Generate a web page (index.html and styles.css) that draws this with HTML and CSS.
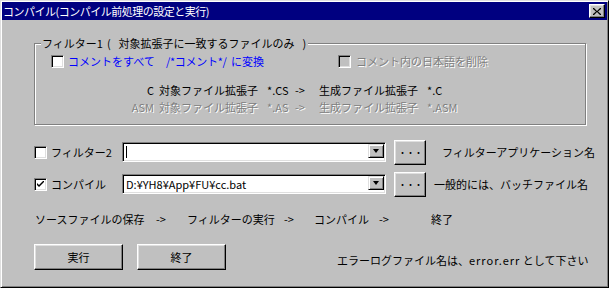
FILE: index.html
```html
<!DOCTYPE html>
<html>
<head>
	<title>コンパイル</title>
	<meta http-equiv="content-type" content="text/html; charset=UTF-8">
	<link rel="stylesheet" href="styles.css">
</head>
<body>
	<div id="window">
		<div id="titlebar">
			<span class="title">コンパイル(コンパイル前処理の設定と実行)</span>
			<span class="close">
				<svg width="8" height="7" viewBox="0 0 8 7">
					<path d="M0 0 L1 0 L4 3 L7 0 L8 0 L8 1 L5 3.5 L8 6 L8 7 L7 7 L4 4 L1 7 L0 7 L0 6 L3 3.5 L0 1 Z" fill="#000"/>
				</svg>
			</span>
		</div>

		<div id="content">
			<div class="group">
				<span class="group-label">フィルター1<span class="gap4">(</span><span class="gap8">対象拡張子に一致するファイルのみ</span><span class="gap8">)</span></span>
				<div class="opt-row">
					<div class="opt-main">
						<span class="check"></span>
						<span class="blue w98">コメントをすべて</span>
						<span class="blue w65">/*コメント*/</span>
						<span class="blue">に変換</span>
					</div>
					<span class="check disabled"></span>
					<span class="dim opt-text">コメント内の日本語を削除</span>
				</div>
				<div class="ext">
					<span class="ext-key">C</span>
					<span>対象ファイル拡張子</span>
					<span>*.CS</span>
					<span>-&gt;</span>
					<span>生成ファイル拡張子</span>
					<span>*.C</span>

					<span class="ext-key dim">ASM</span>
					<span class="dim">対象ファイル拡張子</span>
					<span class="dim">*.AS</span>
					<span class="dim">-&gt;</span>
					<span class="dim">生成ファイル拡張子</span>
					<span class="dim">*.ASM</span>
				</div>
			</div>

			<div class="tool-row first">
				<div class="check-cell">
					<span class="check"></span>
					<span>フィルター2</span>
				</div>
				<div class="combo">
					<span class="combo-text"><span class="caret"></span></span>
					<span class="combo-arrow"><span class="tri"></span></span>
				</div>
				<span class="btn dots">・・・</span>
				<span class="hint wide">フィルターアプリケーション名</span>
			</div>
			<div class="tool-row">
				<div class="check-cell">
					<span class="check checked">
						<svg width="7" height="7" viewBox="0 0 7 7">
							<path d="M0 2 L0 4 L2 6 L7 1 L7 -1 L2 4 Z" fill="#000"/>
						</svg>
					</span>
					<span>コンパイル</span>
				</div>
				<div class="combo">
					<span class="combo-text">D:¥YH8¥App¥FU¥cc.bat</span>
					<span class="combo-arrow"><span class="tri"></span></span>
				</div>
				<span class="btn dots">・・・</span>
				<span class="hint">一般的には、バッチファイル名</span>
			</div>

			<div class="flow">
				<span>ソースファイルの保存</span>
				<span>-&gt;</span>
				<span>フィルターの実行</span>
				<span>-&gt;</span>
				<span>コンパイル</span>
				<span>-&gt;</span>
				<span>終了</span>
			</div>

			<div class="actions">
				<span class="btn action">実行</span>
				<span class="btn action">終了</span>
				<span class="note">エラーログファイル名は、<span class="mono">error.err</span>&nbsp;として下さい</span>
			</div>
		</div>
	</div>
</body>
</html>
```

FILE: styles.css
```css
*{
	box-sizing: border-box;
}

body{
	margin: 0;
	background: #c0c0c0;
	font-family: "Noto Sans CJK JP", "Liberation Sans", sans-serif;
	font-size: 11px;
	line-height: 17px;
	color: #000;
}

#window{
	width: 609px;
	height: 288px;
	padding: 1px;
	border: 1px solid;
	border-color: #dfdfdf #000 #000 #dfdfdf;
	box-shadow: inset 1px 1px 0 #fff, inset -1px -1px 0 #808080;
	background: #c0c0c0;
}

#titlebar{
	height: 18px;
	background: #000080;
	display: flex;
	align-items: center;
	justify-content: space-between;
	padding-left: 1px;
}

#titlebar .title{
	color: #fff;
	letter-spacing: -0.5px;
}

#titlebar .close{
	width: 16px;
	height: 14px;
	margin-right: 2px;
	background: #c0c0c0;
	border: 1px solid;
	border-color: #fff #000 #000 #fff;
	box-shadow: inset -1px -1px 0 #808080, inset 1px 1px 0 #dfdfdf;
	display: flex;
	align-items: center;
	justify-content: center;
}

#content{
	padding: 23px 0 0 32px;
}

.group{
	position: relative;
	width: 552px;
	height: 82px;
	border: 1px solid #808080;
	box-shadow: inset 1px 1px 0 #fff, 1px 1px 0 #fff;
	padding: 11px 0 0 16px;
}

.group-label{
	position: absolute;
	top: -9px;
	left: 6px;
	padding: 0 2px 0 1px;
	background: #c0c0c0;
}

.gap4{
	margin-left: 4px;
}

.gap8{
	margin-left: 8px;
}

.opt-row{
	display: flex;
	align-items: center;
	height: 13px;
}

.opt-main{
	display: flex;
	align-items: center;
	width: 287px;
}

.opt-main .check{
	margin-right: 4px;
}

.opt-text{
	margin-left: 5px;
}

.blue{
	color: #0000ff;
	flex: none;
}

.w98{
	width: 98px;
}

.w65{
	width: 65px;
	letter-spacing: -0.3px;
}

.dim{
	color: #808080;
	text-shadow: 1px 1px 0 #fff;
}

.check{
	width: 13px;
	height: 13px;
	flex: none;
	background: #fff;
	border: 1px solid;
	border-color: #808080 #fff #fff #808080;
	box-shadow: inset 1px 1px 0 #000, inset -1px -1px 0 #dfdfdf;
	display: flex;
	align-items: center;
	justify-content: center;
}

.check.disabled{
	background: #c0c0c0;
}

.ext{
	display: grid;
	grid-template-columns: 40px 108px 28px 24px 108px auto;
	margin: 14px 0 0 68px;
}

.ext-key{
	text-align: right;
	padding-right: 5px;
}

.tool-row{
	display: flex;
	align-items: center;
	height: 26px;
	margin-top: 6px;
}

.tool-row.first{
	margin-top: 14px;
}

.check-cell{
	width: 88px;
	display: flex;
	align-items: center;
	gap: 4px;
}

.combo{
	width: 264px;
	height: 20px;
	margin-right: 8px;
	display: flex;
	padding: 2px;
	background: #fff;
	border: 1px solid;
	border-color: #808080 #fff #fff #808080;
	box-shadow: inset 1px 1px 0 #000, inset -1px -1px 0 #dfdfdf;
}

.combo-text{
	flex: 1;
	display: flex;
	align-items: center;
	padding-left: 1px;
	line-height: 14px;
}

.caret{
	width: 1px;
	height: 12px;
	background: #000;
}

.combo-arrow{
	width: 16px;
	height: 14px;
	margin: -1px -1px 0 0;
	background: #c0c0c0;
	border: 1px solid;
	border-color: #dfdfdf #000 #000 #dfdfdf;
	box-shadow: inset 1px 1px 0 #fff, inset -1px -1px 0 #808080;
	display: flex;
	align-items: center;
	justify-content: center;
}

.tri{
	width: 0;
	height: 0;
	border-left: 3.5px solid transparent;
	border-right: 3.5px solid transparent;
	border-top: 4px solid #000;
}

.btn{
	display: flex;
	align-items: center;
	justify-content: center;
	background: #c0c0c0;
	border: 1px solid;
	border-color: #fff #000 #000 #fff;
	box-shadow: inset -1px -1px 0 #808080, inset 1px 1px 0 #dfdfdf;
}

.dots{
	width: 32px;
	height: 25px;
	font-size: 9px;
	letter-spacing: -1px;
}

.hint{
	margin-left: 8px;
}

.hint.wide{
	margin-left: 16px;
}

.flow{
	display: grid;
	grid-template-columns: 121px 31px 97px 30px 65px 52px auto;
	margin: 14px 0 0 1px;
}

.actions{
	display: flex;
	align-items: center;
	margin-top: 16px;
}

.action{
	width: 89px;
	height: 26px;
	margin-right: 14px;
}

.note{
	margin: 6px 0 0 97px;
}

.mono{
	letter-spacing: 1px;
}
```
